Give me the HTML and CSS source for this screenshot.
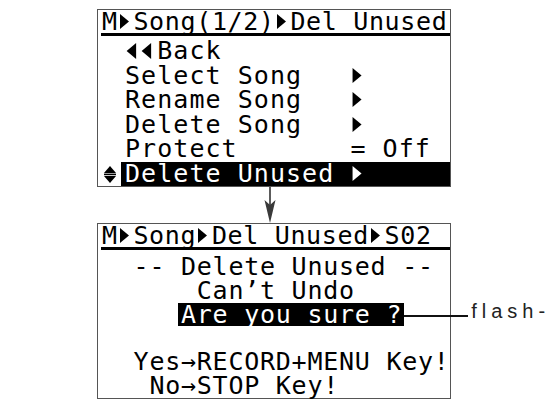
FILE: index.html
```html
<!DOCTYPE html>
<html lang="en">
<head>
<meta charset="utf-8">
<title>Delete Unused</title>
<link rel="stylesheet" href="styles.css">
</head>
<body>
<div class="page">
  <section class="lcd">
    <div class="title">M<svg class="tri" viewBox="0 0 15.7 18"><polygon points="2,2 11,9.5 2,17"/></svg>Song(1/2)<svg class="tri" viewBox="0 0 15.7 18"><polygon points="2,2 11,9.5 2,17"/></svg>Del Unused</div>
    <ul class="rows">
      <li class="row"><span class="mark"></span><span class="item"><svg class="back" viewBox="0 0 32 18"><polygon points="11,2 1.5,10 11,18"/><polygon points="26,2 16.5,10 26,18"/></svg>Back</span></li>
      <li class="row"><span class="mark"></span><span class="item">Select Song   <svg class="cell" viewBox="0 0 16 18"><polygon points="2.5,2 11.5,9.5 2.5,17"/></svg></span></li>
      <li class="row"><span class="mark"></span><span class="item">Rename Song   <svg class="cell" viewBox="0 0 16 18"><polygon points="2.5,2 11.5,9.5 2.5,17"/></svg></span></li>
      <li class="row"><span class="mark"></span><span class="item">Delete Song   <svg class="cell" viewBox="0 0 16 18"><polygon points="2.5,2 11.5,9.5 2.5,17"/></svg></span></li>
      <li class="row"><span class="mark"></span><span class="item">Protect       = Off</span></li>
      <li class="row sel"><span class="mark"><svg class="updown" viewBox="0 0 16 18"><polygon points="2,8 14,8 8,1"/><rect x="2" y="8.6" width="12" height="1.6"/><polygon points="2,11 14,11 8,18"/></svg></span><span class="item">Delete Unused <svg class="cell" viewBox="0 0 16 18"><polygon points="2.5,2 11.5,9.5 2.5,17"/></svg></span></li>
    </ul>
  </section>

  <div class="connector">
    <svg viewBox="0 0 354 36" width="354" height="36"><line x1="173" y1="0" x2="173" y2="30" stroke="#333" stroke-width="1.6"/><polygon points="167.5,13 173,18 178.5,13 173,36" fill="#3a3a3a"/></svg>
  </div>

  <section class="lcd">
    <div class="title">M<svg class="tri" viewBox="0 0 15.7 18"><polygon points="2,2 11,9.5 2,17"/></svg>Song<svg class="tri" viewBox="0 0 15.7 18"><polygon points="2,2 11,9.5 2,17"/></svg>Del Unused<svg class="tri" viewBox="0 0 15.7 18"><polygon points="2,2 11,9.5 2,17"/></svg>S02</div>
    <div class="msg">
      <div class="line col2">-- Delete Unused --</div>
      <div class="line col6">Can’t Undo</div>
      <div class="line col5"><span class="flash">Are you sure ?<span class="callout"><span class="lead"></span><span class="note">flash-</span></span></span></div>
      <div class="line"></div>
      <div class="line col2">Yes→RECORD+MENU Key!</div>
      <div class="line col3">No→STOP Key!</div>
    </div>
  </section>
</div>
</body>
</html>
```

FILE: styles.css
```css
html, body {
  margin: 0;
  padding: 0;
  background: #fff;
}

.page {
  width: 551px;
  height: 401px;
  padding-left: 97px;
  padding-top: 9px;
  box-sizing: border-box;
  display: flex;
  flex-direction: column;
  font-family: "DejaVu Sans Mono", monospace;
  color: #000;
}

.lcd {
  width: 354px;
  box-sizing: border-box;
  border: 1px solid #555;
  display: flex;
  flex-direction: column;
}

.title {
  margin-left: 3px;
  padding-left: 1px;
  height: 23px;
  line-height: 23px;
  font-size: 25px;
  letter-spacing: 0.65px;
  white-space: pre;
  border-bottom: 3px solid #000;
}

.tri {
  width: 15.7px;
  height: 18px;
  vertical-align: baseline;
  fill: #000;
}

.rows {
  list-style: none;
  margin: 0;
  padding: 3px 0 0 0;
}

.row {
  display: flex;
  height: 24.5px;
  line-height: 24.5px;
  font-size: 25px;
  letter-spacing: 1.05px;
  white-space: pre;
}

.mark {
  width: 23px;
  flex: none;
  display: flex;
  align-items: center;
  justify-content: flex-start;
  padding-left: 4px;
  box-sizing: border-box;
}

.item {
  flex: 1;
  padding-left: 4px;
}

.sel .item {
  background: #000;
  color: #fff;
}

.cell {
  width: 16.1px;
  height: 18px;
  vertical-align: baseline;
  fill: currentColor;
}

.back {
  width: 32.2px;
  height: 18px;
  vertical-align: baseline;
  fill: #000;
}

.updown {
  width: 16px;
  height: 18px;
  fill: #000;
}

.connector {
  height: 36px;
  display: flex;
}

.msg {
  padding-top: 5px;
  display: flex;
  flex-direction: column;
}

.line {
  height: 23.75px;
  line-height: 23.75px;
  font-size: 25px;
  letter-spacing: 0.75px;
  white-space: pre;
}

.col2 { padding-left: 35.6px; }
.col3 { padding-left: 51.4px; }
.col5 { padding-left: 80px; }
.col6 { padding-left: 98.8px; }

.flash {
  position: relative;
  display: inline-block;
  background: #000;
  color: #fff;
  padding: 0 2px 0 3px;
}

.callout {
  position: absolute;
  left: 100%;
  top: 0;
  display: flex;
  align-items: flex-end;
  color: #222;
  letter-spacing: 0;
}

.lead {
  width: 64px;
  height: 1.6px;
  margin-bottom: 2px;
  background: #111;
}

.note {
  margin-left: 3px;
  font-family: "Liberation Sans", Arial, sans-serif;
  font-size: 20px;
  line-height: 16px;
  letter-spacing: 5px;
}
```
